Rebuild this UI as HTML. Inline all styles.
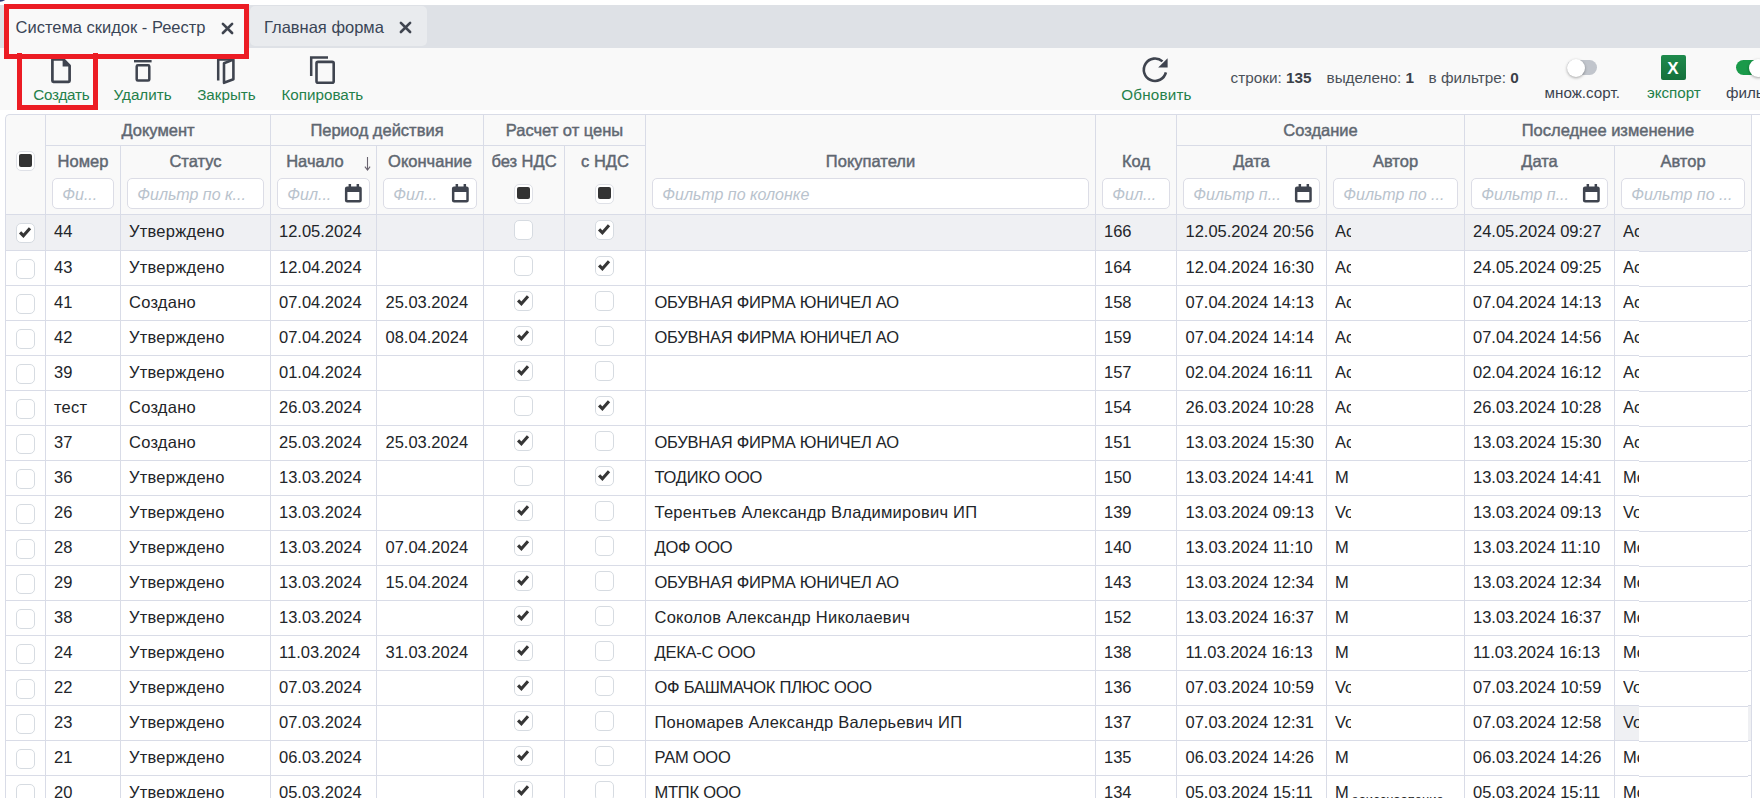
<!DOCTYPE html>
<html><head><meta charset="utf-8"><style>
html,body{margin:0;padding:0;width:1760px;height:798px;overflow:hidden;background:#fff}
body{position:relative;font-family:"Liberation Sans", sans-serif}
.t{position:absolute;white-space:nowrap}
.r{position:absolute;box-sizing:content-box}
svg.r{overflow:visible}
</style></head><body>
<div class="r" style="left:0px;top:0px;width:1760px;height:798px;background:#ffffff"></div>
<div class="r" style="left:-14px;top:-18px;width:24px;height:20px;border-radius:50%;background:#2e3a78;"></div>
<div class="r" style="left:0px;top:5px;width:1760px;height:43px;background:#dee1e6"></div>
<div class="r" style="left:9px;top:9px;width:235px;height:45px;background:#f9f9f9"></div>
<div class="r" style="left:250px;top:6px;width:177px;height:40px;background:#e9ebee;border-radius:5px"></div>
<div class="t" style="left:15.5px;top:18.53px;font-size:16.5px;line-height:16.5px;color:#3a4556;font-weight:normal;font-style:normal;">Система скидок - Реестр</div>
<div class="t" style="left:264px;top:18.73px;font-size:16.5px;line-height:16.5px;color:#3a4556;font-weight:normal;font-style:normal;">Главная форма</div>
<svg class="r" style="left:221px;top:21.5px" width="13" height="12.5" viewBox="0 0 13 12.5"><path d="M1.9 1.8 L11.1 11 M11.1 1.8 L1.9 11" stroke="#3f444f" stroke-width="2.6" stroke-linecap="round"/></svg>
<svg class="r" style="left:399px;top:21.2px" width="13" height="12.5" viewBox="0 0 13 12.5"><path d="M1.9 1.8 L11.1 11 M11.1 1.8 L1.9 11" stroke="#3f444f" stroke-width="2.6" stroke-linecap="round"/></svg>
<div class="r" style="left:0px;top:48px;width:1760px;height:62px;background:#f9f9f9"></div>
<div class="t" style="left:33.2px;top:86.83px;font-size:15.2px;line-height:15.2px;color:#24804a;font-weight:normal;font-style:normal;letter-spacing:-0.2px">Создать</div>
<div class="t" style="left:113.6px;top:86.73px;font-size:15.2px;line-height:15.2px;color:#24804a;font-weight:normal;font-style:normal;">Удалить</div>
<div class="t" style="left:197.2px;top:86.73px;font-size:15.2px;line-height:15.2px;color:#24804a;font-weight:normal;font-style:normal;">Закрыть</div>
<div class="t" style="left:281.5px;top:86.73px;font-size:15.2px;line-height:15.2px;color:#24804a;font-weight:normal;font-style:normal;">Копировать</div>
<div class="t" style="left:1121.3px;top:86.73px;font-size:15.2px;line-height:15.2px;color:#24804a;font-weight:normal;font-style:normal;letter-spacing:0.2px">Обновить</div>
<svg class="r" style="left:48px;top:54px" width="26" height="32" viewBox="0 0 26 32"><path d="M4.4 5.5 H15.5 L21.6 11.6 V26.8 Q21.6 27.8 20.6 27.8 H5.4 Q4.4 27.8 4.4 26.8 Z" fill="none" stroke="#3f444f" stroke-width="2.7" stroke-linejoin="round"/><path d="M14.6 4.2 L22.9 12.5 L14.6 12.5 Z" fill="#3f444f"/></svg>
<svg class="r" style="left:130px;top:56px" width="26" height="30" viewBox="0 0 26 30"><rect x="4" y="4" width="17.6" height="2.4" fill="#3f444f"/><rect x="6.7" y="9.3" width="12.6" height="15.3" rx="1.2" fill="none" stroke="#3f444f" stroke-width="2.5"/></svg>
<svg class="r" style="left:212px;top:55px" width="28" height="32" viewBox="0 0 28 32"><path d="M6.2 25.5 V4.5 H21.2" fill="none" stroke="#3f444f" stroke-width="2.5"/><path d="M12 8.2 L21.4 4.6 V24.2 L12 27.8 Z" fill="none" stroke="#3f444f" stroke-width="2.6" stroke-linejoin="round"/></svg>
<svg class="r" style="left:306px;top:53px" width="32" height="34" viewBox="0 0 32 34"><path d="M5.2 23 V4.6 H22" fill="none" stroke="#3f444f" stroke-width="2.5"/><rect x="10.5" y="8.9" width="17.2" height="20.8" rx="1.5" fill="none" stroke="#3f444f" stroke-width="2.6"/></svg>
<svg class="r" style="left:1140px;top:55px" width="30" height="30" viewBox="0 0 30 30"><path d="M25.9 17.4 A11.2 11.2 0 1 1 22.5 6.4" fill="none" stroke="#3f444f" stroke-width="2.6"/><path d="M18.2 12.6 H27.6 V3.2 Z" fill="#3f444f"/></svg>
<div class="t" style="left:1230.6px;top:69.95px;font-size:15.3px;line-height:15.3px;color:#4a5058">строки: <b style="color:#3b4048">135</b></div>
<div class="t" style="left:1326.5px;top:69.95px;font-size:15.3px;line-height:15.3px;color:#4a5058">выделено: <b style="color:#3b4048">1</b></div>
<div class="t" style="left:1428.6px;top:69.95px;font-size:15.3px;line-height:15.3px;color:#4a5058">в фильтре: <b style="color:#3b4048">0</b></div>
<div class="r" style="left:1567px;top:60px;width:30px;height:15px;background:#c1c5cc;border-radius:8px"></div>
<div class="r" style="left:1567px;top:58.5px;width:18px;height:18px;border-radius:50%;background:#fff;box-shadow:0 1px 3px rgba(0,0,0,0.35)"></div>
<div class="t" style="left:1544.6px;top:84.63px;font-size:15.2px;line-height:15.2px;color:#3b4350;font-weight:normal;font-style:normal;">множ.сорт.</div>
<div class="r" style="left:1660.5px;top:55px;width:25px;height:25px;border-radius:2px;background:linear-gradient(#1e8a4c,#15703c);"></div>
<div class="t" style="left:1660.50px;width:25px;text-align:center;top:60.11px;font-size:17px;line-height:17px;color:#ffffff;font-weight:bold;font-style:normal;">X</div>
<div class="t" style="left:1646.9px;top:84.63px;font-size:15.2px;line-height:15.2px;color:#24804a;font-weight:normal;font-style:normal;">экспорт</div>
<div class="r" style="left:1736px;top:60px;width:40px;height:15px;background:#1a9a4a;border-radius:8px"></div>
<div class="r" style="left:1749px;top:58.5px;width:18px;height:18px;border-radius:50%;background:#fff;box-shadow:0 1px 3px rgba(0,0,0,0.35)"></div>
<div class="t" style="left:1726px;top:84.63px;font-size:15.2px;line-height:15.2px;color:#3b4350;font-weight:normal;font-style:normal;">фильтр</div>
<div class="r" style="left:4px;top:4px;width:235px;height:44.8px;border:5px solid #ec1c24"></div>
<div class="r" style="left:17px;top:53px;width:71px;height:52px;border:5px solid #ec1c24;border-top:none;"></div>
<div class="r" style="left:5px;top:114px;width:1747px;height:100px;background:#f9f9f9;border-top-left-radius:5px"></div>
<div class="r" style="left:5px;top:214px;width:1746px;height:36px;background:#eff0f3"></div>
<div class="r" style="left:1614px;top:705px;width:137px;height:35px;background:#eff0f3"></div>
<div class="t" style="left:45.50px;width:225px;text-align:center;top:121.63px;font-size:16.5px;line-height:16.5px;color:#5f6771;font-weight:normal;font-style:normal;-webkit-text-stroke:0.45px #5f6771;">Документ</div>
<div class="r" style="left:45px;top:145px;width:225px;height:1px;background:#d9dce7"></div>
<div class="t" style="left:270.50px;width:213px;text-align:center;top:121.63px;font-size:16.5px;line-height:16.5px;color:#5f6771;font-weight:normal;font-style:normal;-webkit-text-stroke:0.45px #5f6771;">Период действия</div>
<div class="r" style="left:270px;top:145px;width:213px;height:1px;background:#d9dce7"></div>
<div class="t" style="left:483.50px;width:162px;text-align:center;top:121.63px;font-size:16.5px;line-height:16.5px;color:#5f6771;font-weight:normal;font-style:normal;-webkit-text-stroke:0.45px #5f6771;">Расчет от цены</div>
<div class="r" style="left:483px;top:145px;width:162px;height:1px;background:#d9dce7"></div>
<div class="t" style="left:1176.50px;width:288px;text-align:center;top:121.63px;font-size:16.5px;line-height:16.5px;color:#5f6771;font-weight:normal;font-style:normal;-webkit-text-stroke:0.45px #5f6771;">Создание</div>
<div class="r" style="left:1176px;top:145px;width:288px;height:1px;background:#d9dce7"></div>
<div class="t" style="left:1464.50px;width:287px;text-align:center;top:121.63px;font-size:16.5px;line-height:16.5px;color:#5f6771;font-weight:normal;font-style:normal;-webkit-text-stroke:0.45px #5f6771;">Последнее изменение</div>
<div class="r" style="left:1464px;top:145px;width:287px;height:1px;background:#d9dce7"></div>
<div class="t" style="left:45.50px;width:75px;text-align:center;top:153.33px;font-size:16.5px;line-height:16.5px;color:#5f6771;font-weight:normal;font-style:normal;-webkit-text-stroke:0.45px #5f6771;">Номер</div>
<div class="t" style="left:120.50px;width:150px;text-align:center;top:153.33px;font-size:16.5px;line-height:16.5px;color:#5f6771;font-weight:normal;font-style:normal;-webkit-text-stroke:0.45px #5f6771;">Статус</div>
<div class="t" style="left:376.50px;width:107px;text-align:center;top:153.33px;font-size:16.5px;line-height:16.5px;color:#5f6771;font-weight:normal;font-style:normal;-webkit-text-stroke:0.45px #5f6771;">Окончание</div>
<div class="t" style="left:483.50px;width:81px;text-align:center;top:153.33px;font-size:16.5px;line-height:16.5px;color:#5f6771;font-weight:normal;font-style:normal;-webkit-text-stroke:0.45px #5f6771;">без НДС</div>
<div class="t" style="left:564.50px;width:81px;text-align:center;top:153.33px;font-size:16.5px;line-height:16.5px;color:#5f6771;font-weight:normal;font-style:normal;-webkit-text-stroke:0.45px #5f6771;">с НДС</div>
<div class="t" style="left:645.50px;width:450px;text-align:center;top:153.33px;font-size:16.5px;line-height:16.5px;color:#5f6771;font-weight:normal;font-style:normal;-webkit-text-stroke:0.45px #5f6771;">Покупатели</div>
<div class="t" style="left:1095.50px;width:81px;text-align:center;top:153.33px;font-size:16.5px;line-height:16.5px;color:#5f6771;font-weight:normal;font-style:normal;-webkit-text-stroke:0.45px #5f6771;">Код</div>
<div class="t" style="left:1176.50px;width:150px;text-align:center;top:153.33px;font-size:16.5px;line-height:16.5px;color:#5f6771;font-weight:normal;font-style:normal;-webkit-text-stroke:0.45px #5f6771;">Дата</div>
<div class="t" style="left:1326.50px;width:138px;text-align:center;top:153.33px;font-size:16.5px;line-height:16.5px;color:#5f6771;font-weight:normal;font-style:normal;-webkit-text-stroke:0.45px #5f6771;">Автор</div>
<div class="t" style="left:1464.50px;width:150px;text-align:center;top:153.33px;font-size:16.5px;line-height:16.5px;color:#5f6771;font-weight:normal;font-style:normal;-webkit-text-stroke:0.45px #5f6771;">Дата</div>
<div class="t" style="left:1614.50px;width:137px;text-align:center;top:153.33px;font-size:16.5px;line-height:16.5px;color:#5f6771;font-weight:normal;font-style:normal;-webkit-text-stroke:0.45px #5f6771;">Автор</div>
<div class="t" style="left:286.2px;top:153.33px;font-size:16.5px;line-height:16.5px;color:#5f6771;font-weight:normal;font-style:normal;-webkit-text-stroke:0.45px #5f6771;">Начало</div>
<svg class="r" style="left:363px;top:155px" width="9" height="17" viewBox="0 0 9 17"><path d="M4.5 2 V15 M1.9 11.6 L4.5 15 L7.1 11.6" fill="none" stroke="#6a6470" stroke-width="1.1"/></svg>
<div class="r" style="left:16.0px;top:151px;width:17px;height:18px;border:1px solid #dfe1e7;border-radius:5px;background:#fff"></div>
<div class="r" style="left:19.3px;top:154.2px;width:12.5px;height:12.5px;border-radius:2px;background:#333"></div>
<div class="r" style="left:514.0px;top:183.5px;width:17px;height:18px;border:1px solid #dfe1e7;border-radius:5px;background:#fff"></div>
<div class="r" style="left:517.3px;top:186.7px;width:12.5px;height:12.5px;border-radius:2px;background:#333"></div>
<div class="r" style="left:595.0px;top:183.5px;width:17px;height:18px;border:1px solid #dfe1e7;border-radius:5px;background:#fff"></div>
<div class="r" style="left:598.3px;top:186.7px;width:12.5px;height:12.5px;border-radius:2px;background:#333"></div>
<div class="r" style="left:52px;top:178px;width:62px;height:31px;box-sizing:border-box;border:1px solid #dcdde6;border-radius:5px;background:#fff"></div>
<div class="t" style="left:62.3px;top:187.06px;font-size:16px;line-height:16px;color:#b9c3cd;font-weight:normal;font-style:italic;">Фи...</div>
<div class="r" style="left:127px;top:178px;width:137px;height:31px;box-sizing:border-box;border:1px solid #dcdde6;border-radius:5px;background:#fff"></div>
<div class="t" style="left:137.3px;top:187.06px;font-size:16px;line-height:16px;color:#b9c3cd;font-weight:normal;font-style:italic;">Фильтр по к...</div>
<div class="r" style="left:277px;top:178px;width:93px;height:31px;box-sizing:border-box;border:1px solid #dcdde6;border-radius:5px;background:#fff"></div>
<div class="t" style="left:287.3px;top:187.06px;font-size:16px;line-height:16px;color:#b9c3cd;font-weight:normal;font-style:italic;">Фил...</div>
<svg class="r" style="left:343.7px;top:184px" width="18.7" height="19" viewBox="0.35 0 17.3 19" preserveAspectRatio="none"><path d="M1.2 4.6 Q1.2 2.4 3.2 2.4 H14.8 Q16.8 2.4 16.8 4.6 V16.4 Q16.8 18.4 14.8 18.4 H3.2 Q1.2 18.4 1.2 16.4 Z M3.5 8 V16.1 H14.5 V8 Z" fill="#3f444f" fill-rule="evenodd"/><rect x="4.6" y="0" width="2.3" height="4" fill="#3f444f"/><rect x="12" y="0" width="2.3" height="4" fill="#3f444f"/></svg>
<div class="r" style="left:383px;top:178px;width:94px;height:31px;box-sizing:border-box;border:1px solid #dcdde6;border-radius:5px;background:#fff"></div>
<div class="t" style="left:393.3px;top:187.06px;font-size:16px;line-height:16px;color:#b9c3cd;font-weight:normal;font-style:italic;">Фил...</div>
<svg class="r" style="left:450.7px;top:184px" width="18.7" height="19" viewBox="0.35 0 17.3 19" preserveAspectRatio="none"><path d="M1.2 4.6 Q1.2 2.4 3.2 2.4 H14.8 Q16.8 2.4 16.8 4.6 V16.4 Q16.8 18.4 14.8 18.4 H3.2 Q1.2 18.4 1.2 16.4 Z M3.5 8 V16.1 H14.5 V8 Z" fill="#3f444f" fill-rule="evenodd"/><rect x="4.6" y="0" width="2.3" height="4" fill="#3f444f"/><rect x="12" y="0" width="2.3" height="4" fill="#3f444f"/></svg>
<div class="r" style="left:652px;top:178px;width:437px;height:31px;box-sizing:border-box;border:1px solid #dcdde6;border-radius:5px;background:#fff"></div>
<div class="t" style="left:662.3px;top:187.06px;font-size:16px;line-height:16px;color:#b9c3cd;font-weight:normal;font-style:italic;">Фильтр по колонке</div>
<div class="r" style="left:1102px;top:178px;width:68px;height:31px;box-sizing:border-box;border:1px solid #dcdde6;border-radius:5px;background:#fff"></div>
<div class="t" style="left:1112.3px;top:187.06px;font-size:16px;line-height:16px;color:#b9c3cd;font-weight:normal;font-style:italic;">Фил...</div>
<div class="r" style="left:1183px;top:178px;width:137px;height:31px;box-sizing:border-box;border:1px solid #dcdde6;border-radius:5px;background:#fff"></div>
<div class="t" style="left:1193.3px;top:187.06px;font-size:16px;line-height:16px;color:#b9c3cd;font-weight:normal;font-style:italic;">Фильтр п...</div>
<svg class="r" style="left:1293.7px;top:184px" width="18.7" height="19" viewBox="0.35 0 17.3 19" preserveAspectRatio="none"><path d="M1.2 4.6 Q1.2 2.4 3.2 2.4 H14.8 Q16.8 2.4 16.8 4.6 V16.4 Q16.8 18.4 14.8 18.4 H3.2 Q1.2 18.4 1.2 16.4 Z M3.5 8 V16.1 H14.5 V8 Z" fill="#3f444f" fill-rule="evenodd"/><rect x="4.6" y="0" width="2.3" height="4" fill="#3f444f"/><rect x="12" y="0" width="2.3" height="4" fill="#3f444f"/></svg>
<div class="r" style="left:1333px;top:178px;width:125px;height:31px;box-sizing:border-box;border:1px solid #dcdde6;border-radius:5px;background:#fff"></div>
<div class="t" style="left:1343.3px;top:187.06px;font-size:16px;line-height:16px;color:#b9c3cd;font-weight:normal;font-style:italic;">Фильтр по ...</div>
<div class="r" style="left:1471px;top:178px;width:137px;height:31px;box-sizing:border-box;border:1px solid #dcdde6;border-radius:5px;background:#fff"></div>
<div class="t" style="left:1481.3px;top:187.06px;font-size:16px;line-height:16px;color:#b9c3cd;font-weight:normal;font-style:italic;">Фильтр п...</div>
<svg class="r" style="left:1581.7px;top:184px" width="18.7" height="19" viewBox="0.35 0 17.3 19" preserveAspectRatio="none"><path d="M1.2 4.6 Q1.2 2.4 3.2 2.4 H14.8 Q16.8 2.4 16.8 4.6 V16.4 Q16.8 18.4 14.8 18.4 H3.2 Q1.2 18.4 1.2 16.4 Z M3.5 8 V16.1 H14.5 V8 Z" fill="#3f444f" fill-rule="evenodd"/><rect x="4.6" y="0" width="2.3" height="4" fill="#3f444f"/><rect x="12" y="0" width="2.3" height="4" fill="#3f444f"/></svg>
<div class="r" style="left:1621px;top:178px;width:124px;height:31px;box-sizing:border-box;border:1px solid #dcdde6;border-radius:5px;background:#fff"></div>
<div class="t" style="left:1631.3px;top:187.06px;font-size:16px;line-height:16px;color:#b9c3cd;font-weight:normal;font-style:italic;">Фильтр по ...</div>
<div class="r" style="left:5px;top:120px;width:1px;height:678px;background:#d9dce7"></div>
<div class="r" style="left:45px;top:114px;width:1px;height:684px;background:#d9dce7"></div>
<div class="r" style="left:120px;top:145px;width:1px;height:653px;background:#d9dce7"></div>
<div class="r" style="left:270px;top:114px;width:1px;height:684px;background:#d9dce7"></div>
<div class="r" style="left:376px;top:145px;width:1px;height:653px;background:#d9dce7"></div>
<div class="r" style="left:483px;top:114px;width:1px;height:684px;background:#d9dce7"></div>
<div class="r" style="left:564px;top:145px;width:1px;height:653px;background:#d9dce7"></div>
<div class="r" style="left:645px;top:114px;width:1px;height:684px;background:#d9dce7"></div>
<div class="r" style="left:1095px;top:114px;width:1px;height:684px;background:#d9dce7"></div>
<div class="r" style="left:1176px;top:114px;width:1px;height:684px;background:#d9dce7"></div>
<div class="r" style="left:1326px;top:145px;width:1px;height:653px;background:#d9dce7"></div>
<div class="r" style="left:1464px;top:114px;width:1px;height:684px;background:#d9dce7"></div>
<div class="r" style="left:1614px;top:145px;width:1px;height:653px;background:#d9dce7"></div>
<div class="r" style="left:1751px;top:114px;width:1px;height:684px;background:#d9dce7"></div>
<div class="r" style="left:11px;top:114px;width:1749px;height:1px;background:#d9dce7"></div>
<div class="r" style="left:5px;top:114px;width:8px;height:8px;border-left:1px solid #d9dce7;border-top:1px solid #d9dce7;border-top-left-radius:5px"></div>
<div class="r" style="left:5px;top:214px;width:1747px;height:1px;background:#d9dce7"></div>
<div class="r" style="left:5px;top:250px;width:1747px;height:1px;background:#d9dce7"></div>
<div class="r" style="left:5px;top:285px;width:1747px;height:1px;background:#d9dce7"></div>
<div class="r" style="left:5px;top:320px;width:1747px;height:1px;background:#d9dce7"></div>
<div class="r" style="left:5px;top:355px;width:1747px;height:1px;background:#d9dce7"></div>
<div class="r" style="left:5px;top:390px;width:1747px;height:1px;background:#d9dce7"></div>
<div class="r" style="left:5px;top:425px;width:1747px;height:1px;background:#d9dce7"></div>
<div class="r" style="left:5px;top:460px;width:1747px;height:1px;background:#d9dce7"></div>
<div class="r" style="left:5px;top:495px;width:1747px;height:1px;background:#d9dce7"></div>
<div class="r" style="left:5px;top:530px;width:1747px;height:1px;background:#d9dce7"></div>
<div class="r" style="left:5px;top:565px;width:1747px;height:1px;background:#d9dce7"></div>
<div class="r" style="left:5px;top:600px;width:1747px;height:1px;background:#d9dce7"></div>
<div class="r" style="left:5px;top:635px;width:1747px;height:1px;background:#d9dce7"></div>
<div class="r" style="left:5px;top:670px;width:1747px;height:1px;background:#d9dce7"></div>
<div class="r" style="left:5px;top:705px;width:1747px;height:1px;background:#d9dce7"></div>
<div class="r" style="left:5px;top:740px;width:1747px;height:1px;background:#d9dce7"></div>
<div class="r" style="left:5px;top:775px;width:1747px;height:1px;background:#d9dce7"></div>
<div class="r" style="left:16.2px;top:223px;width:17px;height:17.5px;border:1px solid #d6dbe1;border-radius:5px;background:#fff"></div>
<svg class="r" style="left:16.2px;top:223px" width="19" height="19" viewBox="0 0 19 19"><path d="M4.1 9.3 L7.4 12.7 L14 5.3" fill="none" stroke="#363636" stroke-width="3.1" stroke-linejoin="miter" stroke-linecap="butt"/></svg>
<div class="t" style="left:54px;top:222.73px;font-size:16.5px;line-height:16.5px;color:#222529;font-weight:normal;font-style:normal;">44</div>
<div class="t" style="left:129px;top:222.73px;font-size:16.5px;line-height:16.5px;color:#222529;font-weight:normal;font-style:normal;letter-spacing:0.25px;">Утверждено</div>
<div class="t" style="left:279px;top:222.73px;font-size:16.5px;line-height:16.5px;color:#222529;font-weight:normal;font-style:normal;">12.05.2024</div>
<div class="r" style="left:514.2px;top:220px;width:17px;height:17.5px;border:1px solid #d6dbe1;border-radius:5px;background:#fff"></div>
<div class="r" style="left:595.2px;top:220px;width:17px;height:17.5px;border:1px solid #d6dbe1;border-radius:5px;background:#fff"></div>
<svg class="r" style="left:595.2px;top:220px" width="19" height="19" viewBox="0 0 19 19"><path d="M4.1 9.3 L7.4 12.7 L14 5.3" fill="none" stroke="#363636" stroke-width="3.1" stroke-linejoin="miter" stroke-linecap="butt"/></svg>
<div class="t" style="left:1104px;top:222.73px;font-size:16.5px;line-height:16.5px;color:#222529;font-weight:normal;font-style:normal;">166</div>
<div class="t" style="left:1185.5px;top:222.73px;font-size:16.5px;line-height:16.5px;color:#222529;font-weight:normal;font-style:normal;">12.05.2024 20:56</div>
<div class="t" style="left:1335px;top:222.73px;font-size:16.5px;line-height:16.5px;color:#222529;font-weight:normal;font-style:normal;width:16px;overflow:hidden;white-space:nowrap">Ac</div>
<div class="t" style="left:1473px;top:222.73px;font-size:16.5px;line-height:16.5px;color:#222529;font-weight:normal;font-style:normal;">24.05.2024 09:27</div>
<div class="t" style="left:1623px;top:222.73px;font-size:16.5px;line-height:16.5px;color:#222529;font-weight:normal;font-style:normal;width:16px;overflow:hidden;white-space:nowrap">Ac</div>
<div class="r" style="left:16.2px;top:259px;width:17px;height:17.5px;border:1px solid #d6dbe1;border-radius:5px;background:#fff"></div>
<div class="t" style="left:54px;top:258.63px;font-size:16.5px;line-height:16.5px;color:#222529;font-weight:normal;font-style:normal;">43</div>
<div class="t" style="left:129px;top:258.63px;font-size:16.5px;line-height:16.5px;color:#222529;font-weight:normal;font-style:normal;letter-spacing:0.25px;">Утверждено</div>
<div class="t" style="left:279px;top:258.63px;font-size:16.5px;line-height:16.5px;color:#222529;font-weight:normal;font-style:normal;">12.04.2024</div>
<div class="r" style="left:514.2px;top:256px;width:17px;height:17.5px;border:1px solid #d6dbe1;border-radius:5px;background:#fff"></div>
<div class="r" style="left:595.2px;top:256px;width:17px;height:17.5px;border:1px solid #d6dbe1;border-radius:5px;background:#fff"></div>
<svg class="r" style="left:595.2px;top:256px" width="19" height="19" viewBox="0 0 19 19"><path d="M4.1 9.3 L7.4 12.7 L14 5.3" fill="none" stroke="#363636" stroke-width="3.1" stroke-linejoin="miter" stroke-linecap="butt"/></svg>
<div class="t" style="left:1104px;top:258.63px;font-size:16.5px;line-height:16.5px;color:#222529;font-weight:normal;font-style:normal;">164</div>
<div class="t" style="left:1185.5px;top:258.63px;font-size:16.5px;line-height:16.5px;color:#222529;font-weight:normal;font-style:normal;">12.04.2024 16:30</div>
<div class="t" style="left:1335px;top:258.63px;font-size:16.5px;line-height:16.5px;color:#222529;font-weight:normal;font-style:normal;width:16px;overflow:hidden;white-space:nowrap">Ac</div>
<div class="t" style="left:1473px;top:258.63px;font-size:16.5px;line-height:16.5px;color:#222529;font-weight:normal;font-style:normal;">24.05.2024 09:25</div>
<div class="t" style="left:1623px;top:258.63px;font-size:16.5px;line-height:16.5px;color:#222529;font-weight:normal;font-style:normal;width:16px;overflow:hidden;white-space:nowrap">Ac</div>
<div class="r" style="left:16.2px;top:294px;width:17px;height:17.5px;border:1px solid #d6dbe1;border-radius:5px;background:#fff"></div>
<div class="t" style="left:54px;top:293.63px;font-size:16.5px;line-height:16.5px;color:#222529;font-weight:normal;font-style:normal;">41</div>
<div class="t" style="left:129px;top:293.63px;font-size:16.5px;line-height:16.5px;color:#222529;font-weight:normal;font-style:normal;letter-spacing:0.25px;">Создано</div>
<div class="t" style="left:279px;top:293.63px;font-size:16.5px;line-height:16.5px;color:#222529;font-weight:normal;font-style:normal;">07.04.2024</div>
<div class="t" style="left:385.5px;top:293.63px;font-size:16.5px;line-height:16.5px;color:#222529;font-weight:normal;font-style:normal;">25.03.2024</div>
<div class="r" style="left:514.2px;top:291px;width:17px;height:17.5px;border:1px solid #d6dbe1;border-radius:5px;background:#fff"></div>
<svg class="r" style="left:514.2px;top:291px" width="19" height="19" viewBox="0 0 19 19"><path d="M4.1 9.3 L7.4 12.7 L14 5.3" fill="none" stroke="#363636" stroke-width="3.1" stroke-linejoin="miter" stroke-linecap="butt"/></svg>
<div class="r" style="left:595.2px;top:291px;width:17px;height:17.5px;border:1px solid #d6dbe1;border-radius:5px;background:#fff"></div>
<div class="t" style="left:654.5px;top:293.63px;font-size:16.5px;line-height:16.5px;color:#222529;font-weight:normal;font-style:normal;letter-spacing:-0.25px;">ОБУВНАЯ ФИРМА ЮНИЧЕЛ АО</div>
<div class="t" style="left:1104px;top:293.63px;font-size:16.5px;line-height:16.5px;color:#222529;font-weight:normal;font-style:normal;">158</div>
<div class="t" style="left:1185.5px;top:293.63px;font-size:16.5px;line-height:16.5px;color:#222529;font-weight:normal;font-style:normal;">07.04.2024 14:13</div>
<div class="t" style="left:1335px;top:293.63px;font-size:16.5px;line-height:16.5px;color:#222529;font-weight:normal;font-style:normal;width:16px;overflow:hidden;white-space:nowrap">Ac</div>
<div class="t" style="left:1473px;top:293.63px;font-size:16.5px;line-height:16.5px;color:#222529;font-weight:normal;font-style:normal;">07.04.2024 14:13</div>
<div class="t" style="left:1623px;top:293.63px;font-size:16.5px;line-height:16.5px;color:#222529;font-weight:normal;font-style:normal;width:16px;overflow:hidden;white-space:nowrap">Ac</div>
<div class="r" style="left:16.2px;top:329px;width:17px;height:17.5px;border:1px solid #d6dbe1;border-radius:5px;background:#fff"></div>
<div class="t" style="left:54px;top:328.63px;font-size:16.5px;line-height:16.5px;color:#222529;font-weight:normal;font-style:normal;">42</div>
<div class="t" style="left:129px;top:328.63px;font-size:16.5px;line-height:16.5px;color:#222529;font-weight:normal;font-style:normal;letter-spacing:0.25px;">Утверждено</div>
<div class="t" style="left:279px;top:328.63px;font-size:16.5px;line-height:16.5px;color:#222529;font-weight:normal;font-style:normal;">07.04.2024</div>
<div class="t" style="left:385.5px;top:328.63px;font-size:16.5px;line-height:16.5px;color:#222529;font-weight:normal;font-style:normal;">08.04.2024</div>
<div class="r" style="left:514.2px;top:326px;width:17px;height:17.5px;border:1px solid #d6dbe1;border-radius:5px;background:#fff"></div>
<svg class="r" style="left:514.2px;top:326px" width="19" height="19" viewBox="0 0 19 19"><path d="M4.1 9.3 L7.4 12.7 L14 5.3" fill="none" stroke="#363636" stroke-width="3.1" stroke-linejoin="miter" stroke-linecap="butt"/></svg>
<div class="r" style="left:595.2px;top:326px;width:17px;height:17.5px;border:1px solid #d6dbe1;border-radius:5px;background:#fff"></div>
<div class="t" style="left:654.5px;top:328.63px;font-size:16.5px;line-height:16.5px;color:#222529;font-weight:normal;font-style:normal;letter-spacing:-0.25px;">ОБУВНАЯ ФИРМА ЮНИЧЕЛ АО</div>
<div class="t" style="left:1104px;top:328.63px;font-size:16.5px;line-height:16.5px;color:#222529;font-weight:normal;font-style:normal;">159</div>
<div class="t" style="left:1185.5px;top:328.63px;font-size:16.5px;line-height:16.5px;color:#222529;font-weight:normal;font-style:normal;">07.04.2024 14:14</div>
<div class="t" style="left:1335px;top:328.63px;font-size:16.5px;line-height:16.5px;color:#222529;font-weight:normal;font-style:normal;width:16px;overflow:hidden;white-space:nowrap">Ac</div>
<div class="t" style="left:1473px;top:328.63px;font-size:16.5px;line-height:16.5px;color:#222529;font-weight:normal;font-style:normal;">07.04.2024 14:56</div>
<div class="t" style="left:1623px;top:328.63px;font-size:16.5px;line-height:16.5px;color:#222529;font-weight:normal;font-style:normal;width:16px;overflow:hidden;white-space:nowrap">Ac</div>
<div class="r" style="left:16.2px;top:364px;width:17px;height:17.5px;border:1px solid #d6dbe1;border-radius:5px;background:#fff"></div>
<div class="t" style="left:54px;top:363.63px;font-size:16.5px;line-height:16.5px;color:#222529;font-weight:normal;font-style:normal;">39</div>
<div class="t" style="left:129px;top:363.63px;font-size:16.5px;line-height:16.5px;color:#222529;font-weight:normal;font-style:normal;letter-spacing:0.25px;">Утверждено</div>
<div class="t" style="left:279px;top:363.63px;font-size:16.5px;line-height:16.5px;color:#222529;font-weight:normal;font-style:normal;">01.04.2024</div>
<div class="r" style="left:514.2px;top:361px;width:17px;height:17.5px;border:1px solid #d6dbe1;border-radius:5px;background:#fff"></div>
<svg class="r" style="left:514.2px;top:361px" width="19" height="19" viewBox="0 0 19 19"><path d="M4.1 9.3 L7.4 12.7 L14 5.3" fill="none" stroke="#363636" stroke-width="3.1" stroke-linejoin="miter" stroke-linecap="butt"/></svg>
<div class="r" style="left:595.2px;top:361px;width:17px;height:17.5px;border:1px solid #d6dbe1;border-radius:5px;background:#fff"></div>
<div class="t" style="left:1104px;top:363.63px;font-size:16.5px;line-height:16.5px;color:#222529;font-weight:normal;font-style:normal;">157</div>
<div class="t" style="left:1185.5px;top:363.63px;font-size:16.5px;line-height:16.5px;color:#222529;font-weight:normal;font-style:normal;">02.04.2024 16:11</div>
<div class="t" style="left:1335px;top:363.63px;font-size:16.5px;line-height:16.5px;color:#222529;font-weight:normal;font-style:normal;width:16px;overflow:hidden;white-space:nowrap">Ac</div>
<div class="t" style="left:1473px;top:363.63px;font-size:16.5px;line-height:16.5px;color:#222529;font-weight:normal;font-style:normal;">02.04.2024 16:12</div>
<div class="t" style="left:1623px;top:363.63px;font-size:16.5px;line-height:16.5px;color:#222529;font-weight:normal;font-style:normal;width:16px;overflow:hidden;white-space:nowrap">Ac</div>
<div class="r" style="left:16.2px;top:399px;width:17px;height:17.5px;border:1px solid #d6dbe1;border-radius:5px;background:#fff"></div>
<div class="t" style="left:54px;top:398.63px;font-size:16.5px;line-height:16.5px;color:#222529;font-weight:normal;font-style:normal;letter-spacing:0.25px;">тест</div>
<div class="t" style="left:129px;top:398.63px;font-size:16.5px;line-height:16.5px;color:#222529;font-weight:normal;font-style:normal;letter-spacing:0.25px;">Создано</div>
<div class="t" style="left:279px;top:398.63px;font-size:16.5px;line-height:16.5px;color:#222529;font-weight:normal;font-style:normal;">26.03.2024</div>
<div class="r" style="left:514.2px;top:396px;width:17px;height:17.5px;border:1px solid #d6dbe1;border-radius:5px;background:#fff"></div>
<div class="r" style="left:595.2px;top:396px;width:17px;height:17.5px;border:1px solid #d6dbe1;border-radius:5px;background:#fff"></div>
<svg class="r" style="left:595.2px;top:396px" width="19" height="19" viewBox="0 0 19 19"><path d="M4.1 9.3 L7.4 12.7 L14 5.3" fill="none" stroke="#363636" stroke-width="3.1" stroke-linejoin="miter" stroke-linecap="butt"/></svg>
<div class="t" style="left:1104px;top:398.63px;font-size:16.5px;line-height:16.5px;color:#222529;font-weight:normal;font-style:normal;">154</div>
<div class="t" style="left:1185.5px;top:398.63px;font-size:16.5px;line-height:16.5px;color:#222529;font-weight:normal;font-style:normal;">26.03.2024 10:28</div>
<div class="t" style="left:1335px;top:398.63px;font-size:16.5px;line-height:16.5px;color:#222529;font-weight:normal;font-style:normal;width:16px;overflow:hidden;white-space:nowrap">Ac</div>
<div class="t" style="left:1473px;top:398.63px;font-size:16.5px;line-height:16.5px;color:#222529;font-weight:normal;font-style:normal;">26.03.2024 10:28</div>
<div class="t" style="left:1623px;top:398.63px;font-size:16.5px;line-height:16.5px;color:#222529;font-weight:normal;font-style:normal;width:16px;overflow:hidden;white-space:nowrap">Ac</div>
<div class="r" style="left:16.2px;top:434px;width:17px;height:17.5px;border:1px solid #d6dbe1;border-radius:5px;background:#fff"></div>
<div class="t" style="left:54px;top:433.63px;font-size:16.5px;line-height:16.5px;color:#222529;font-weight:normal;font-style:normal;">37</div>
<div class="t" style="left:129px;top:433.63px;font-size:16.5px;line-height:16.5px;color:#222529;font-weight:normal;font-style:normal;letter-spacing:0.25px;">Создано</div>
<div class="t" style="left:279px;top:433.63px;font-size:16.5px;line-height:16.5px;color:#222529;font-weight:normal;font-style:normal;">25.03.2024</div>
<div class="t" style="left:385.5px;top:433.63px;font-size:16.5px;line-height:16.5px;color:#222529;font-weight:normal;font-style:normal;">25.03.2024</div>
<div class="r" style="left:514.2px;top:431px;width:17px;height:17.5px;border:1px solid #d6dbe1;border-radius:5px;background:#fff"></div>
<svg class="r" style="left:514.2px;top:431px" width="19" height="19" viewBox="0 0 19 19"><path d="M4.1 9.3 L7.4 12.7 L14 5.3" fill="none" stroke="#363636" stroke-width="3.1" stroke-linejoin="miter" stroke-linecap="butt"/></svg>
<div class="r" style="left:595.2px;top:431px;width:17px;height:17.5px;border:1px solid #d6dbe1;border-radius:5px;background:#fff"></div>
<div class="t" style="left:654.5px;top:433.63px;font-size:16.5px;line-height:16.5px;color:#222529;font-weight:normal;font-style:normal;letter-spacing:-0.25px;">ОБУВНАЯ ФИРМА ЮНИЧЕЛ АО</div>
<div class="t" style="left:1104px;top:433.63px;font-size:16.5px;line-height:16.5px;color:#222529;font-weight:normal;font-style:normal;">151</div>
<div class="t" style="left:1185.5px;top:433.63px;font-size:16.5px;line-height:16.5px;color:#222529;font-weight:normal;font-style:normal;">13.03.2024 15:30</div>
<div class="t" style="left:1335px;top:433.63px;font-size:16.5px;line-height:16.5px;color:#222529;font-weight:normal;font-style:normal;width:16px;overflow:hidden;white-space:nowrap">Ac</div>
<div class="t" style="left:1473px;top:433.63px;font-size:16.5px;line-height:16.5px;color:#222529;font-weight:normal;font-style:normal;">13.03.2024 15:30</div>
<div class="t" style="left:1623px;top:433.63px;font-size:16.5px;line-height:16.5px;color:#222529;font-weight:normal;font-style:normal;width:16px;overflow:hidden;white-space:nowrap">Ac</div>
<div class="r" style="left:16.2px;top:469px;width:17px;height:17.5px;border:1px solid #d6dbe1;border-radius:5px;background:#fff"></div>
<div class="t" style="left:54px;top:468.63px;font-size:16.5px;line-height:16.5px;color:#222529;font-weight:normal;font-style:normal;">36</div>
<div class="t" style="left:129px;top:468.63px;font-size:16.5px;line-height:16.5px;color:#222529;font-weight:normal;font-style:normal;letter-spacing:0.25px;">Утверждено</div>
<div class="t" style="left:279px;top:468.63px;font-size:16.5px;line-height:16.5px;color:#222529;font-weight:normal;font-style:normal;">13.03.2024</div>
<div class="r" style="left:514.2px;top:466px;width:17px;height:17.5px;border:1px solid #d6dbe1;border-radius:5px;background:#fff"></div>
<div class="r" style="left:595.2px;top:466px;width:17px;height:17.5px;border:1px solid #d6dbe1;border-radius:5px;background:#fff"></div>
<svg class="r" style="left:595.2px;top:466px" width="19" height="19" viewBox="0 0 19 19"><path d="M4.1 9.3 L7.4 12.7 L14 5.3" fill="none" stroke="#363636" stroke-width="3.1" stroke-linejoin="miter" stroke-linecap="butt"/></svg>
<div class="t" style="left:654.5px;top:468.63px;font-size:16.5px;line-height:16.5px;color:#222529;font-weight:normal;font-style:normal;letter-spacing:-0.25px;">ТОДИКО ООО</div>
<div class="t" style="left:1104px;top:468.63px;font-size:16.5px;line-height:16.5px;color:#222529;font-weight:normal;font-style:normal;">150</div>
<div class="t" style="left:1185.5px;top:468.63px;font-size:16.5px;line-height:16.5px;color:#222529;font-weight:normal;font-style:normal;">13.03.2024 14:41</div>
<div class="t" style="left:1335px;top:468.63px;font-size:16.5px;line-height:16.5px;color:#222529;font-weight:normal;font-style:normal;width:16px;overflow:hidden;white-space:nowrap">M</div>
<div class="t" style="left:1473px;top:468.63px;font-size:16.5px;line-height:16.5px;color:#222529;font-weight:normal;font-style:normal;">13.03.2024 14:41</div>
<div class="t" style="left:1623px;top:468.63px;font-size:16.5px;line-height:16.5px;color:#222529;font-weight:normal;font-style:normal;width:16px;overflow:hidden;white-space:nowrap">Mo</div>
<div class="r" style="left:16.2px;top:504px;width:17px;height:17.5px;border:1px solid #d6dbe1;border-radius:5px;background:#fff"></div>
<div class="t" style="left:54px;top:503.63px;font-size:16.5px;line-height:16.5px;color:#222529;font-weight:normal;font-style:normal;">26</div>
<div class="t" style="left:129px;top:503.63px;font-size:16.5px;line-height:16.5px;color:#222529;font-weight:normal;font-style:normal;letter-spacing:0.25px;">Утверждено</div>
<div class="t" style="left:279px;top:503.63px;font-size:16.5px;line-height:16.5px;color:#222529;font-weight:normal;font-style:normal;">13.03.2024</div>
<div class="r" style="left:514.2px;top:501px;width:17px;height:17.5px;border:1px solid #d6dbe1;border-radius:5px;background:#fff"></div>
<svg class="r" style="left:514.2px;top:501px" width="19" height="19" viewBox="0 0 19 19"><path d="M4.1 9.3 L7.4 12.7 L14 5.3" fill="none" stroke="#363636" stroke-width="3.1" stroke-linejoin="miter" stroke-linecap="butt"/></svg>
<div class="r" style="left:595.2px;top:501px;width:17px;height:17.5px;border:1px solid #d6dbe1;border-radius:5px;background:#fff"></div>
<div class="t" style="left:654.5px;top:503.63px;font-size:16.5px;line-height:16.5px;color:#222529;font-weight:normal;font-style:normal;letter-spacing:0.25px;">Терентьев Александр Владимирович ИП</div>
<div class="t" style="left:1104px;top:503.63px;font-size:16.5px;line-height:16.5px;color:#222529;font-weight:normal;font-style:normal;">139</div>
<div class="t" style="left:1185.5px;top:503.63px;font-size:16.5px;line-height:16.5px;color:#222529;font-weight:normal;font-style:normal;">13.03.2024 09:13</div>
<div class="t" style="left:1335px;top:503.63px;font-size:16.5px;line-height:16.5px;color:#222529;font-weight:normal;font-style:normal;width:16px;overflow:hidden;white-space:nowrap">Vo</div>
<div class="t" style="left:1473px;top:503.63px;font-size:16.5px;line-height:16.5px;color:#222529;font-weight:normal;font-style:normal;">13.03.2024 09:13</div>
<div class="t" style="left:1623px;top:503.63px;font-size:16.5px;line-height:16.5px;color:#222529;font-weight:normal;font-style:normal;width:16px;overflow:hidden;white-space:nowrap">Vo</div>
<div class="r" style="left:16.2px;top:539px;width:17px;height:17.5px;border:1px solid #d6dbe1;border-radius:5px;background:#fff"></div>
<div class="t" style="left:54px;top:538.63px;font-size:16.5px;line-height:16.5px;color:#222529;font-weight:normal;font-style:normal;">28</div>
<div class="t" style="left:129px;top:538.63px;font-size:16.5px;line-height:16.5px;color:#222529;font-weight:normal;font-style:normal;letter-spacing:0.25px;">Утверждено</div>
<div class="t" style="left:279px;top:538.63px;font-size:16.5px;line-height:16.5px;color:#222529;font-weight:normal;font-style:normal;">13.03.2024</div>
<div class="t" style="left:385.5px;top:538.63px;font-size:16.5px;line-height:16.5px;color:#222529;font-weight:normal;font-style:normal;">07.04.2024</div>
<div class="r" style="left:514.2px;top:536px;width:17px;height:17.5px;border:1px solid #d6dbe1;border-radius:5px;background:#fff"></div>
<svg class="r" style="left:514.2px;top:536px" width="19" height="19" viewBox="0 0 19 19"><path d="M4.1 9.3 L7.4 12.7 L14 5.3" fill="none" stroke="#363636" stroke-width="3.1" stroke-linejoin="miter" stroke-linecap="butt"/></svg>
<div class="r" style="left:595.2px;top:536px;width:17px;height:17.5px;border:1px solid #d6dbe1;border-radius:5px;background:#fff"></div>
<div class="t" style="left:654.5px;top:538.63px;font-size:16.5px;line-height:16.5px;color:#222529;font-weight:normal;font-style:normal;letter-spacing:-0.25px;">ДОФ ООО</div>
<div class="t" style="left:1104px;top:538.63px;font-size:16.5px;line-height:16.5px;color:#222529;font-weight:normal;font-style:normal;">140</div>
<div class="t" style="left:1185.5px;top:538.63px;font-size:16.5px;line-height:16.5px;color:#222529;font-weight:normal;font-style:normal;">13.03.2024 11:10</div>
<div class="t" style="left:1335px;top:538.63px;font-size:16.5px;line-height:16.5px;color:#222529;font-weight:normal;font-style:normal;width:16px;overflow:hidden;white-space:nowrap">M</div>
<div class="t" style="left:1473px;top:538.63px;font-size:16.5px;line-height:16.5px;color:#222529;font-weight:normal;font-style:normal;">13.03.2024 11:10</div>
<div class="t" style="left:1623px;top:538.63px;font-size:16.5px;line-height:16.5px;color:#222529;font-weight:normal;font-style:normal;width:16px;overflow:hidden;white-space:nowrap">Mo</div>
<div class="r" style="left:16.2px;top:574px;width:17px;height:17.5px;border:1px solid #d6dbe1;border-radius:5px;background:#fff"></div>
<div class="t" style="left:54px;top:573.63px;font-size:16.5px;line-height:16.5px;color:#222529;font-weight:normal;font-style:normal;">29</div>
<div class="t" style="left:129px;top:573.63px;font-size:16.5px;line-height:16.5px;color:#222529;font-weight:normal;font-style:normal;letter-spacing:0.25px;">Утверждено</div>
<div class="t" style="left:279px;top:573.63px;font-size:16.5px;line-height:16.5px;color:#222529;font-weight:normal;font-style:normal;">13.03.2024</div>
<div class="t" style="left:385.5px;top:573.63px;font-size:16.5px;line-height:16.5px;color:#222529;font-weight:normal;font-style:normal;">15.04.2024</div>
<div class="r" style="left:514.2px;top:571px;width:17px;height:17.5px;border:1px solid #d6dbe1;border-radius:5px;background:#fff"></div>
<svg class="r" style="left:514.2px;top:571px" width="19" height="19" viewBox="0 0 19 19"><path d="M4.1 9.3 L7.4 12.7 L14 5.3" fill="none" stroke="#363636" stroke-width="3.1" stroke-linejoin="miter" stroke-linecap="butt"/></svg>
<div class="r" style="left:595.2px;top:571px;width:17px;height:17.5px;border:1px solid #d6dbe1;border-radius:5px;background:#fff"></div>
<div class="t" style="left:654.5px;top:573.63px;font-size:16.5px;line-height:16.5px;color:#222529;font-weight:normal;font-style:normal;letter-spacing:-0.25px;">ОБУВНАЯ ФИРМА ЮНИЧЕЛ АО</div>
<div class="t" style="left:1104px;top:573.63px;font-size:16.5px;line-height:16.5px;color:#222529;font-weight:normal;font-style:normal;">143</div>
<div class="t" style="left:1185.5px;top:573.63px;font-size:16.5px;line-height:16.5px;color:#222529;font-weight:normal;font-style:normal;">13.03.2024 12:34</div>
<div class="t" style="left:1335px;top:573.63px;font-size:16.5px;line-height:16.5px;color:#222529;font-weight:normal;font-style:normal;width:16px;overflow:hidden;white-space:nowrap">M</div>
<div class="t" style="left:1473px;top:573.63px;font-size:16.5px;line-height:16.5px;color:#222529;font-weight:normal;font-style:normal;">13.03.2024 12:34</div>
<div class="t" style="left:1623px;top:573.63px;font-size:16.5px;line-height:16.5px;color:#222529;font-weight:normal;font-style:normal;width:16px;overflow:hidden;white-space:nowrap">Mo</div>
<div class="r" style="left:16.2px;top:609px;width:17px;height:17.5px;border:1px solid #d6dbe1;border-radius:5px;background:#fff"></div>
<div class="t" style="left:54px;top:608.63px;font-size:16.5px;line-height:16.5px;color:#222529;font-weight:normal;font-style:normal;">38</div>
<div class="t" style="left:129px;top:608.63px;font-size:16.5px;line-height:16.5px;color:#222529;font-weight:normal;font-style:normal;letter-spacing:0.25px;">Утверждено</div>
<div class="t" style="left:279px;top:608.63px;font-size:16.5px;line-height:16.5px;color:#222529;font-weight:normal;font-style:normal;">13.03.2024</div>
<div class="r" style="left:514.2px;top:606px;width:17px;height:17.5px;border:1px solid #d6dbe1;border-radius:5px;background:#fff"></div>
<svg class="r" style="left:514.2px;top:606px" width="19" height="19" viewBox="0 0 19 19"><path d="M4.1 9.3 L7.4 12.7 L14 5.3" fill="none" stroke="#363636" stroke-width="3.1" stroke-linejoin="miter" stroke-linecap="butt"/></svg>
<div class="r" style="left:595.2px;top:606px;width:17px;height:17.5px;border:1px solid #d6dbe1;border-radius:5px;background:#fff"></div>
<div class="t" style="left:654.5px;top:608.63px;font-size:16.5px;line-height:16.5px;color:#222529;font-weight:normal;font-style:normal;letter-spacing:0.25px;">Соколов Александр Николаевич</div>
<div class="t" style="left:1104px;top:608.63px;font-size:16.5px;line-height:16.5px;color:#222529;font-weight:normal;font-style:normal;">152</div>
<div class="t" style="left:1185.5px;top:608.63px;font-size:16.5px;line-height:16.5px;color:#222529;font-weight:normal;font-style:normal;">13.03.2024 16:37</div>
<div class="t" style="left:1335px;top:608.63px;font-size:16.5px;line-height:16.5px;color:#222529;font-weight:normal;font-style:normal;width:16px;overflow:hidden;white-space:nowrap">M</div>
<div class="t" style="left:1473px;top:608.63px;font-size:16.5px;line-height:16.5px;color:#222529;font-weight:normal;font-style:normal;">13.03.2024 16:37</div>
<div class="t" style="left:1623px;top:608.63px;font-size:16.5px;line-height:16.5px;color:#222529;font-weight:normal;font-style:normal;width:16px;overflow:hidden;white-space:nowrap">Mo</div>
<div class="r" style="left:16.2px;top:644px;width:17px;height:17.5px;border:1px solid #d6dbe1;border-radius:5px;background:#fff"></div>
<div class="t" style="left:54px;top:643.63px;font-size:16.5px;line-height:16.5px;color:#222529;font-weight:normal;font-style:normal;">24</div>
<div class="t" style="left:129px;top:643.63px;font-size:16.5px;line-height:16.5px;color:#222529;font-weight:normal;font-style:normal;letter-spacing:0.25px;">Утверждено</div>
<div class="t" style="left:279px;top:643.63px;font-size:16.5px;line-height:16.5px;color:#222529;font-weight:normal;font-style:normal;">11.03.2024</div>
<div class="t" style="left:385.5px;top:643.63px;font-size:16.5px;line-height:16.5px;color:#222529;font-weight:normal;font-style:normal;">31.03.2024</div>
<div class="r" style="left:514.2px;top:641px;width:17px;height:17.5px;border:1px solid #d6dbe1;border-radius:5px;background:#fff"></div>
<svg class="r" style="left:514.2px;top:641px" width="19" height="19" viewBox="0 0 19 19"><path d="M4.1 9.3 L7.4 12.7 L14 5.3" fill="none" stroke="#363636" stroke-width="3.1" stroke-linejoin="miter" stroke-linecap="butt"/></svg>
<div class="r" style="left:595.2px;top:641px;width:17px;height:17.5px;border:1px solid #d6dbe1;border-radius:5px;background:#fff"></div>
<div class="t" style="left:654.5px;top:643.63px;font-size:16.5px;line-height:16.5px;color:#222529;font-weight:normal;font-style:normal;letter-spacing:-0.25px;">ДЕКА-С ООО</div>
<div class="t" style="left:1104px;top:643.63px;font-size:16.5px;line-height:16.5px;color:#222529;font-weight:normal;font-style:normal;">138</div>
<div class="t" style="left:1185.5px;top:643.63px;font-size:16.5px;line-height:16.5px;color:#222529;font-weight:normal;font-style:normal;">11.03.2024 16:13</div>
<div class="t" style="left:1335px;top:643.63px;font-size:16.5px;line-height:16.5px;color:#222529;font-weight:normal;font-style:normal;width:16px;overflow:hidden;white-space:nowrap">M</div>
<div class="t" style="left:1473px;top:643.63px;font-size:16.5px;line-height:16.5px;color:#222529;font-weight:normal;font-style:normal;">11.03.2024 16:13</div>
<div class="t" style="left:1623px;top:643.63px;font-size:16.5px;line-height:16.5px;color:#222529;font-weight:normal;font-style:normal;width:16px;overflow:hidden;white-space:nowrap">Mo</div>
<div class="r" style="left:16.2px;top:679px;width:17px;height:17.5px;border:1px solid #d6dbe1;border-radius:5px;background:#fff"></div>
<div class="t" style="left:54px;top:678.63px;font-size:16.5px;line-height:16.5px;color:#222529;font-weight:normal;font-style:normal;">22</div>
<div class="t" style="left:129px;top:678.63px;font-size:16.5px;line-height:16.5px;color:#222529;font-weight:normal;font-style:normal;letter-spacing:0.25px;">Утверждено</div>
<div class="t" style="left:279px;top:678.63px;font-size:16.5px;line-height:16.5px;color:#222529;font-weight:normal;font-style:normal;">07.03.2024</div>
<div class="r" style="left:514.2px;top:676px;width:17px;height:17.5px;border:1px solid #d6dbe1;border-radius:5px;background:#fff"></div>
<svg class="r" style="left:514.2px;top:676px" width="19" height="19" viewBox="0 0 19 19"><path d="M4.1 9.3 L7.4 12.7 L14 5.3" fill="none" stroke="#363636" stroke-width="3.1" stroke-linejoin="miter" stroke-linecap="butt"/></svg>
<div class="r" style="left:595.2px;top:676px;width:17px;height:17.5px;border:1px solid #d6dbe1;border-radius:5px;background:#fff"></div>
<div class="t" style="left:654.5px;top:678.63px;font-size:16.5px;line-height:16.5px;color:#222529;font-weight:normal;font-style:normal;letter-spacing:-0.25px;">ОФ БАШМАЧОК ПЛЮС ООО</div>
<div class="t" style="left:1104px;top:678.63px;font-size:16.5px;line-height:16.5px;color:#222529;font-weight:normal;font-style:normal;">136</div>
<div class="t" style="left:1185.5px;top:678.63px;font-size:16.5px;line-height:16.5px;color:#222529;font-weight:normal;font-style:normal;">07.03.2024 10:59</div>
<div class="t" style="left:1335px;top:678.63px;font-size:16.5px;line-height:16.5px;color:#222529;font-weight:normal;font-style:normal;width:16px;overflow:hidden;white-space:nowrap">Vo</div>
<div class="t" style="left:1473px;top:678.63px;font-size:16.5px;line-height:16.5px;color:#222529;font-weight:normal;font-style:normal;">07.03.2024 10:59</div>
<div class="t" style="left:1623px;top:678.63px;font-size:16.5px;line-height:16.5px;color:#222529;font-weight:normal;font-style:normal;width:16px;overflow:hidden;white-space:nowrap">Vo</div>
<div class="r" style="left:16.2px;top:714px;width:17px;height:17.5px;border:1px solid #d6dbe1;border-radius:5px;background:#fff"></div>
<div class="t" style="left:54px;top:713.63px;font-size:16.5px;line-height:16.5px;color:#222529;font-weight:normal;font-style:normal;">23</div>
<div class="t" style="left:129px;top:713.63px;font-size:16.5px;line-height:16.5px;color:#222529;font-weight:normal;font-style:normal;letter-spacing:0.25px;">Утверждено</div>
<div class="t" style="left:279px;top:713.63px;font-size:16.5px;line-height:16.5px;color:#222529;font-weight:normal;font-style:normal;">07.03.2024</div>
<div class="r" style="left:514.2px;top:711px;width:17px;height:17.5px;border:1px solid #d6dbe1;border-radius:5px;background:#fff"></div>
<svg class="r" style="left:514.2px;top:711px" width="19" height="19" viewBox="0 0 19 19"><path d="M4.1 9.3 L7.4 12.7 L14 5.3" fill="none" stroke="#363636" stroke-width="3.1" stroke-linejoin="miter" stroke-linecap="butt"/></svg>
<div class="r" style="left:595.2px;top:711px;width:17px;height:17.5px;border:1px solid #d6dbe1;border-radius:5px;background:#fff"></div>
<div class="t" style="left:654.5px;top:713.63px;font-size:16.5px;line-height:16.5px;color:#222529;font-weight:normal;font-style:normal;letter-spacing:0.25px;">Пономарев Александр Валерьевич ИП</div>
<div class="t" style="left:1104px;top:713.63px;font-size:16.5px;line-height:16.5px;color:#222529;font-weight:normal;font-style:normal;">137</div>
<div class="t" style="left:1185.5px;top:713.63px;font-size:16.5px;line-height:16.5px;color:#222529;font-weight:normal;font-style:normal;">07.03.2024 12:31</div>
<div class="t" style="left:1335px;top:713.63px;font-size:16.5px;line-height:16.5px;color:#222529;font-weight:normal;font-style:normal;width:16px;overflow:hidden;white-space:nowrap">Vo</div>
<div class="t" style="left:1473px;top:713.63px;font-size:16.5px;line-height:16.5px;color:#222529;font-weight:normal;font-style:normal;">07.03.2024 12:58</div>
<div class="t" style="left:1623px;top:713.63px;font-size:16.5px;line-height:16.5px;color:#222529;font-weight:normal;font-style:normal;width:16px;overflow:hidden;white-space:nowrap">Vo</div>
<div class="r" style="left:16.2px;top:749px;width:17px;height:17.5px;border:1px solid #d6dbe1;border-radius:5px;background:#fff"></div>
<div class="t" style="left:54px;top:748.63px;font-size:16.5px;line-height:16.5px;color:#222529;font-weight:normal;font-style:normal;">21</div>
<div class="t" style="left:129px;top:748.63px;font-size:16.5px;line-height:16.5px;color:#222529;font-weight:normal;font-style:normal;letter-spacing:0.25px;">Утверждено</div>
<div class="t" style="left:279px;top:748.63px;font-size:16.5px;line-height:16.5px;color:#222529;font-weight:normal;font-style:normal;">06.03.2024</div>
<div class="r" style="left:514.2px;top:746px;width:17px;height:17.5px;border:1px solid #d6dbe1;border-radius:5px;background:#fff"></div>
<svg class="r" style="left:514.2px;top:746px" width="19" height="19" viewBox="0 0 19 19"><path d="M4.1 9.3 L7.4 12.7 L14 5.3" fill="none" stroke="#363636" stroke-width="3.1" stroke-linejoin="miter" stroke-linecap="butt"/></svg>
<div class="r" style="left:595.2px;top:746px;width:17px;height:17.5px;border:1px solid #d6dbe1;border-radius:5px;background:#fff"></div>
<div class="t" style="left:654.5px;top:748.63px;font-size:16.5px;line-height:16.5px;color:#222529;font-weight:normal;font-style:normal;letter-spacing:-0.25px;">РАМ ООО</div>
<div class="t" style="left:1104px;top:748.63px;font-size:16.5px;line-height:16.5px;color:#222529;font-weight:normal;font-style:normal;">135</div>
<div class="t" style="left:1185.5px;top:748.63px;font-size:16.5px;line-height:16.5px;color:#222529;font-weight:normal;font-style:normal;">06.03.2024 14:26</div>
<div class="t" style="left:1335px;top:748.63px;font-size:16.5px;line-height:16.5px;color:#222529;font-weight:normal;font-style:normal;width:16px;overflow:hidden;white-space:nowrap">M</div>
<div class="t" style="left:1473px;top:748.63px;font-size:16.5px;line-height:16.5px;color:#222529;font-weight:normal;font-style:normal;">06.03.2024 14:26</div>
<div class="t" style="left:1623px;top:748.63px;font-size:16.5px;line-height:16.5px;color:#222529;font-weight:normal;font-style:normal;width:16px;overflow:hidden;white-space:nowrap">Mo</div>
<div class="r" style="left:16.2px;top:784px;width:17px;height:17.5px;border:1px solid #d6dbe1;border-radius:5px;background:#fff"></div>
<div class="t" style="left:54px;top:783.63px;font-size:16.5px;line-height:16.5px;color:#222529;font-weight:normal;font-style:normal;">20</div>
<div class="t" style="left:129px;top:783.63px;font-size:16.5px;line-height:16.5px;color:#222529;font-weight:normal;font-style:normal;letter-spacing:0.25px;">Утверждено</div>
<div class="t" style="left:279px;top:783.63px;font-size:16.5px;line-height:16.5px;color:#222529;font-weight:normal;font-style:normal;">05.03.2024</div>
<div class="r" style="left:514.2px;top:781px;width:17px;height:17.5px;border:1px solid #d6dbe1;border-radius:5px;background:#fff"></div>
<svg class="r" style="left:514.2px;top:781px" width="19" height="19" viewBox="0 0 19 19"><path d="M4.1 9.3 L7.4 12.7 L14 5.3" fill="none" stroke="#363636" stroke-width="3.1" stroke-linejoin="miter" stroke-linecap="butt"/></svg>
<div class="r" style="left:595.2px;top:781px;width:17px;height:17.5px;border:1px solid #d6dbe1;border-radius:5px;background:#fff"></div>
<div class="t" style="left:654.5px;top:783.63px;font-size:16.5px;line-height:16.5px;color:#222529;font-weight:normal;font-style:normal;letter-spacing:-0.25px;">МТПК ООО</div>
<div class="t" style="left:1104px;top:783.63px;font-size:16.5px;line-height:16.5px;color:#222529;font-weight:normal;font-style:normal;">134</div>
<div class="t" style="left:1185.5px;top:783.63px;font-size:16.5px;line-height:16.5px;color:#222529;font-weight:normal;font-style:normal;">05.03.2024 15:11</div>
<div class="t" style="left:1335px;top:783.63px;font-size:16.5px;line-height:16.5px;color:#222529;font-weight:normal;font-style:normal;width:16px;overflow:hidden;white-space:nowrap">M</div>
<div class="t" style="left:1473px;top:783.63px;font-size:16.5px;line-height:16.5px;color:#222529;font-weight:normal;font-style:normal;">05.03.2024 15:11</div>
<div class="t" style="left:1623px;top:783.63px;font-size:16.5px;line-height:16.5px;color:#222529;font-weight:normal;font-style:normal;width:16px;overflow:hidden;white-space:nowrap">Mo</div>
<div class="t" style="left:1352px;top:792.5px;font-size:13px;line-height:13px;color:#222">эаисснаапение</div>
<div class="r" style="left:1639px;top:215px;width:109px;height:583px;background:#fff"></div>
<div class="r" style="left:1639px;top:215px;width:109px;height:36px;background:#eff0f3"></div>
<div class="r" style="left:1639px;top:251px;width:109px;height:1px;background:#d9dce7"></div>
<div class="r" style="left:1639px;top:286px;width:109px;height:1px;background:#d9dce7"></div>
<div class="r" style="left:1639px;top:321px;width:109px;height:1px;background:#d9dce7"></div>
<div class="r" style="left:1639px;top:356px;width:109px;height:1px;background:#d9dce7"></div>
<div class="r" style="left:1639px;top:391px;width:109px;height:1px;background:#d9dce7"></div>
<div class="r" style="left:1639px;top:426px;width:109px;height:1px;background:#d9dce7"></div>
<div class="r" style="left:1639px;top:461px;width:109px;height:1px;background:#d9dce7"></div>
<div class="r" style="left:1639px;top:496px;width:109px;height:1px;background:#d9dce7"></div>
<div class="r" style="left:1639px;top:531px;width:109px;height:1px;background:#d9dce7"></div>
<div class="r" style="left:1639px;top:566px;width:109px;height:1px;background:#d9dce7"></div>
<div class="r" style="left:1639px;top:601px;width:109px;height:1px;background:#d9dce7"></div>
<div class="r" style="left:1639px;top:636px;width:109px;height:1px;background:#d9dce7"></div>
<div class="r" style="left:1639px;top:671px;width:109px;height:1px;background:#d9dce7"></div>
<div class="r" style="left:1639px;top:706px;width:109px;height:1px;background:#d9dce7"></div>
<div class="r" style="left:1639px;top:741px;width:109px;height:1px;background:#d9dce7"></div>
<div class="r" style="left:1639px;top:776px;width:109px;height:1px;background:#d9dce7"></div>
</body></html>
